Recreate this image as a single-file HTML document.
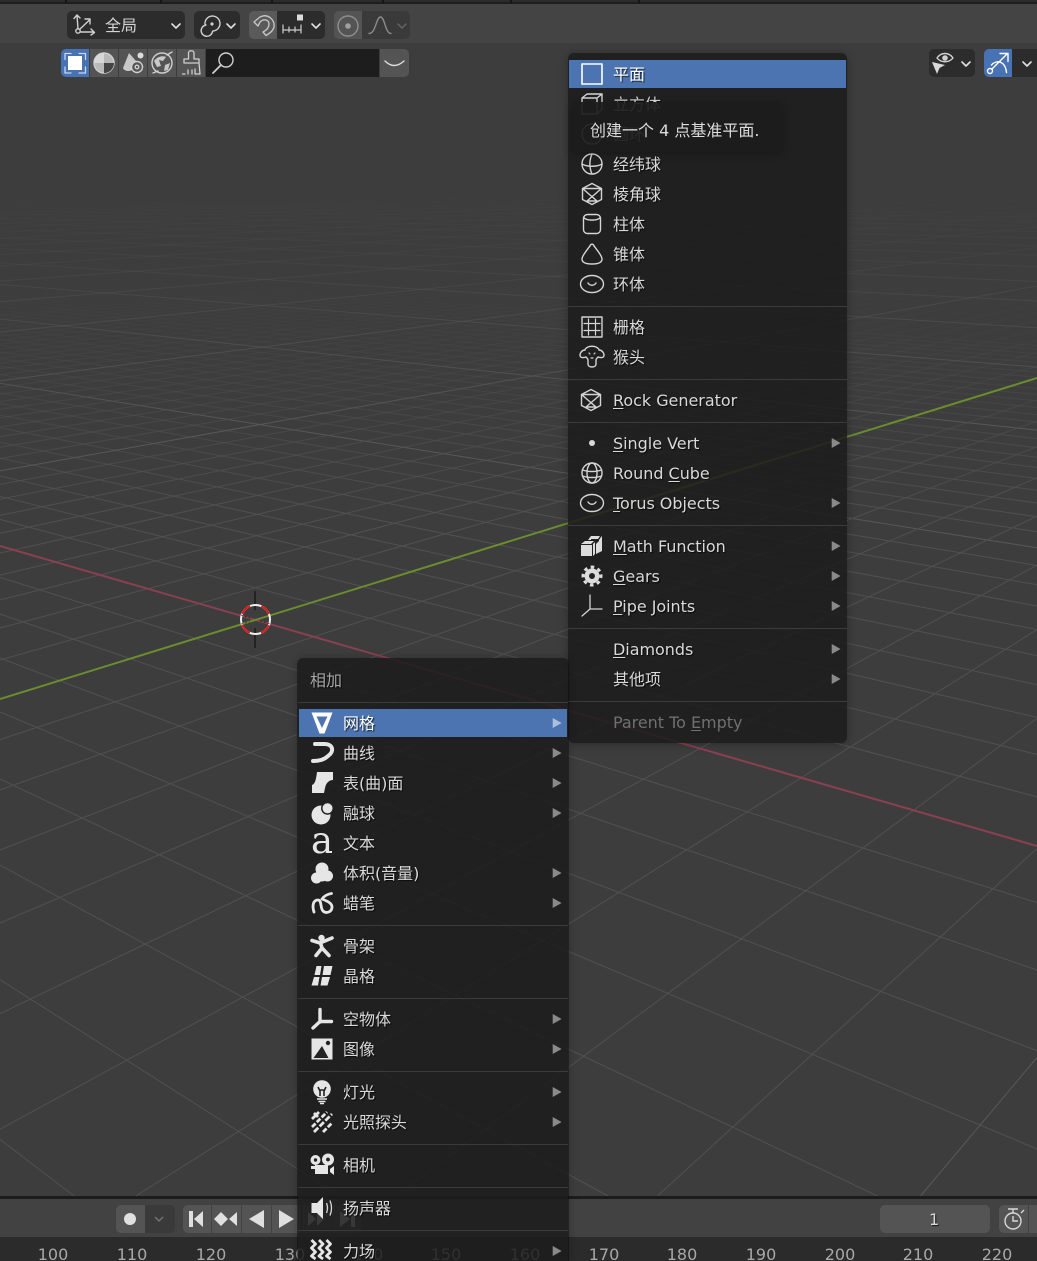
<!DOCTYPE html>
<html lang="zh"><head><meta charset="utf-8"><title>Blender</title>
<style>
html,body{margin:0;padding:0;background:#3d3d3d;width:1037px;height:1261px;overflow:hidden}
#p{position:relative;width:1037px;height:1261px;overflow:hidden;background:#3d3d3d;font-family:"DejaVu Sans","Noto Sans CJK SC",sans-serif;font-size:16px;color:#d9d9d9}
.b,.t,svg.a{position:absolute}
svg.a{left:0;top:0;width:1037px;height:1261px;overflow:hidden}
.t{height:22px;line-height:22px;white-space:pre;margin-top:1px;letter-spacing:-.03px;text-shadow:1px 1px 1px rgba(0,0,0,.75)}
.t u{text-underline-offset:2px;text-decoration-thickness:1px}
.n{position:absolute;top:1244px;width:60px;margin-left:-30px;text-align:center;color:#a8a8a8;font-size:16px;line-height:22px;height:17px;overflow:hidden}
.m{position:absolute;background:rgba(28,28,28,.86);border-radius:6px;box-shadow:0 1px 9px rgba(0,0,0,.3)}
.s{position:absolute;height:1px;background:#3b3b3b}
</style></head><body><div id="p">

<svg class="a" id="grid" viewBox="0 0 1037 1261">
<defs>
<linearGradient id="gm" gradientUnits="userSpaceOnUse" x1="0" y1="270" x2="0" y2="520"><stop offset="0" stop-color="#505050" stop-opacity="0"/><stop offset=".24" stop-color="#505050" stop-opacity=".15"/><stop offset=".52" stop-color="#505050" stop-opacity=".45"/><stop offset="1" stop-color="#505050"/></linearGradient>
<linearGradient id="gM" gradientUnits="userSpaceOnUse" x1="0" y1="190" x2="0" y2="430"><stop offset="0" stop-color="#585858" stop-opacity="0"/><stop offset=".3" stop-color="#585858" stop-opacity=".2"/><stop offset="1" stop-color="#585858"/></linearGradient>
</defs>
<g id="gl" fill="none" stroke-width="1"></g>
<path d="M0 546L1037 846" stroke="#8a4050" stroke-width="2" fill="none"/>
<path d="M0 699L1037 378" stroke="#6c8c2e" stroke-width="2" fill="none"/>
</svg>
<script>
(function(){var s='',VX=[-1250,185],VY=[1800,150],W=1037,H=1196;
function L(v,d,m){var l=Math.hypot(d[0],d[1]),dx=d[0]/l*6000,dy=d[1]/l*6000,a=0,b=1,
p=[-dx,dx,-dy,dy],q=[v[0],W-v[0],v[1],H-v[1]];
for(var i=0;i<4;i++){if(p[i]==0){if(q[i]<0)return;continue;}var r=q[i]/p[i];if(p[i]<0){if(r>a)a=r;}else{if(r<b)b=r;}}
if(a>=b)return;
s+='<path stroke="url(#g'+(m?'M':'m')+')" d="M'+(v[0]+a*dx).toFixed(1)+' '+(v[1]+a*dy).toFixed(1)+'L'+(v[0]+b*dx).toFixed(1)+' '+(v[1]+b*dy).toFixed(1)+'"/>';}
for(var k=-150;k<=13;k++){if(k==0)continue;var m=k%10==0;if(!m&&k<-35)continue;var w=.001829-.00014*k;L(VX,[1819.7*w,1-21*w],m);}
for(var j=-150;j<=13;j++){if(j==0)continue;var m2=j%10==0;if(!m2&&j<-35)continue;var u=.00278-.000209*j;L(VY,[-1230.3*u,14*u+1],m2);}
document.getElementById('gl').innerHTML=s;})();
</script>

<!-- 3D cursor -->
<svg class="a" viewBox="0 0 1037 1261">
<path d="M255 591V610M255 628V648" stroke="#151515" stroke-width="1.2"/>
<circle cx="255.5" cy="619.5" r="14.5" fill="none" stroke="#f0f0f0" stroke-width="2"/>
<circle cx="255.5" cy="619.5" r="14.5" fill="none" stroke="#e01a1a" stroke-width="2" stroke-dasharray="11.4 11.4" stroke-dashoffset="5.7" transform="rotate(-45 255.5 619.5)"/>
<path d="M241 615L250 618M260 621L270 624M241 624L250 622" stroke="#222" stroke-width="1" stroke-dasharray="2 2" opacity=".7"/>
</svg>

<!-- top bar -->
<div class="b" style="left:0;top:0;width:1037px;height:4px;background:#1e1e1e"></div>
<div class="b" style="left:0;top:0;width:1037px;height:2px;background:#2b2b2b"></div>
<div class="b" style="left:65px;top:0;width:2px;height:3px;background:#161616"></div>
<div class="b" style="left:160px;top:0;width:2px;height:3px;background:#161616"></div>
<div class="b" style="left:271px;top:0;width:2px;height:3px;background:#161616"></div>
<div class="b" style="left:382px;top:0;width:2px;height:3px;background:#161616"></div>
<div class="b" style="left:510px;top:0;width:2px;height:3px;background:#161616"></div>
<div class="b" style="left:638px;top:0;width:2px;height:3px;background:#161616"></div>
<div class="b" style="left:0;top:4px;width:1037px;height:39px;background:#444"></div>

<!-- toolbar row 1 -->
<div class="b" style="left:67px;top:11px;width:118px;height:28px;background:#2c2c2c;border-radius:5px"></div>
<div class="t" style="left:105px;top:15px;margin-top:0;text-shadow:none;color:#d4d4d4">全局</div>
<div class="b" style="left:194px;top:11px;width:46px;height:28px;background:#2c2c2c;border-radius:5px"></div>
<div class="b" style="left:249px;top:11px;width:28px;height:28px;background:#5a5a5a;border-radius:5px 0 0 5px"></div>
<div class="b" style="left:277px;top:11px;width:48px;height:28px;background:#2c2c2c;border-radius:0 5px 5px 0"></div>
<div class="b" style="left:334px;top:11px;width:28px;height:28px;background:#545454;border-radius:5px 0 0 5px"></div>
<div class="b" style="left:362px;top:11px;width:48px;height:28px;background:#3a3a3a;border-radius:0 5px 5px 0"></div>

<!-- toolbar row 2 -->
<div class="b" style="left:61px;top:49px;width:28px;height:28px;background:#4772b3;border-radius:5px 0 0 5px"></div>
<div class="b" style="left:90px;top:49px;width:28px;height:28px;background:#545454"></div>
<div class="b" style="left:119px;top:49px;width:28px;height:28px;background:#545454"></div>
<div class="b" style="left:148px;top:49px;width:28px;height:28px;background:#545454"></div>
<div class="b" style="left:177px;top:49px;width:28px;height:28px;background:#545454"></div>
<div class="b" style="left:206px;top:49px;width:173px;height:28px;background:#1d1d1d"></div>
<div class="b" style="left:380px;top:49px;width:29px;height:28px;background:#545454;border-radius:0 5px 5px 0"></div>

<!-- right tools -->
<div class="b" style="left:929px;top:49px;width:46px;height:28px;background:#2c2c2c;border-radius:5px"></div>
<div class="b" style="left:984px;top:49px;width:28px;height:28px;background:#4772b3;border-radius:5px 0 0 5px"></div>
<div class="b" style="left:1012px;top:49px;width:25px;height:28px;background:#2c2c2c"></div>

<svg class="a" viewBox="0 0 1037 1261" fill="none" stroke="#d0d0d0" stroke-width="1.4" stroke-linecap="round" stroke-linejoin="round">
<!-- chevrons -->
<path d="M172 24L176 28L180 24M227 24L231 28L235 24M312 24L316 28L320 24M962 62L966 66L970 62M1023 62L1027 66L1031 62" stroke="#e0e0e0" stroke-width="1.6"/>
<path d="M398 24L402 28L406 24" stroke="#666"/>
<!-- axes -->
<circle cx="78" cy="31" r="2.2"/><path d="M78 29L77 15M74 18.500L77 15L80 18M80 29L90 19.500M85 19L90 19L90 24M80.500 32H94M91 29L94.500 32.500L91 35"/>
<!-- pivot -->
<path d="M205 24A7.500 7.500 0 1 1 213 31" /><path d="M207 25A5.700 5.700 0 1 0 213.500 31.500" transform="translate(-1 0)"/><circle cx="212" cy="24" r="1.600" fill="#d0d0d0" stroke="none"/>
<!-- magnet -->
<path d="M254 22L260 17C268 13 275 20 274 27C273 31 270 33 266 35.500L263 32C267 30 269 27 269 24C269 20 264 18 260 22L258 26Z" stroke="#c4c4c4"/>
<!-- increment -->
<rect x="297" y="14.500" width="6" height="6" fill="#ddd" stroke="none"/><path d="M283 25V33M301 25V33M283 30H301M289 27V32M295 27V32" stroke="#ccc" stroke-width="1.200"/>
<!-- proportional -->
<circle cx="348" cy="26" r="10" stroke="#8e8e8e"/><circle cx="348" cy="26" r="2.800" fill="#a0a0a0" stroke="none"/>
<path d="M369 33.500C376 33.500 376 17 380.500 17C385 17 385 33.500 391 33.500" stroke="#8a8a8a"/>
<!-- select -->
<rect x="68" y="56" width="14" height="14" fill="#fff" stroke="none"/>
<path d="M71 53.500H65V59.500M79 53.500H85.500V59.500M65 67V73H71M79 73H85.500V67" stroke="#c9d6ec" stroke-width="1.300"/>
<!-- shading -->
<circle cx="104" cy="63" r="10" fill="#b9b9b9" stroke="#cfcfcf"/><path d="M104 63V73A10 10 0 0 0 114 63Z" fill="#444" stroke="none"/><path d="M104 63V53A10 10 0 0 0 94 63Z" fill="#d8d8d8" stroke="none"/>
<!-- overlays -->
<path d="M129 53L123 68C124 71 129 72 132 70C131 66 133 63 136 61Z" fill="#c8c8c8" stroke="none"/><circle cx="140.500" cy="55.500" r="3" fill="#ddd" stroke="none"/><circle cx="137" cy="67" r="5.500"/><circle cx="137" cy="67" r="1.800"/>
<!-- world -->
<circle cx="162" cy="63" r="10"/><path d="M154 61C157 57 162 55 166 57L163 61L159 60L161 66L157 67ZM165 65L170 63L168 70L164 71Z" fill="#c8c8c8" stroke="none"/><path d="M153 73L158 71M167 55L172 52"/>
<!-- brush -->
<path d="M188.500 53C188.500 50 194 50 194 53V59H199V63H184V59H188.500ZM184 63H199L200 74H195V69M192 74V70M188 74V70M185 74H182.500Z" stroke-width="1.300"/>
<!-- search -->
<circle cx="226" cy="60" r="7"/><path d="M221 65L213 73" stroke-width="1.800"/>
<path d="M385 61Q394 70 404 61" stroke="#ddd" stroke-width="1.400"/>
<!-- eye cursor -->
<path d="M937 58C941 52 949 52 953 58C949 63 941 63 937 58Z"/><circle cx="945" cy="58" r="2.800" fill="#d0d0d0" stroke="none"/>
<path d="M932 62L945 65L939.500 68L937 74Z" fill="#d8d8d8" stroke="none"/>
<!-- gizmo -->
<circle cx="990" cy="71" r="2.500" stroke="#fff"/><path d="M992 69L1007 54M1000 53.500H1008V61.500M991.500 65C996 60 1005 60 1006.500 72.500" stroke="#fff"/>
</svg>

<!-- timeline -->
<div class="b" style="left:0;top:1196px;width:1037px;height:3px;background:#1c1c1c"></div>
<div class="b" style="left:0;top:1199px;width:1037px;height:38px;background:#424242"></div>
<div class="b" style="left:0;top:1237px;width:1037px;height:24px;background:#2b2b2b"></div>
<div class="b" style="left:116px;top:1205px;width:29px;height:28px;background:#545454;border-radius:5px 0 0 5px"></div>
<div class="b" style="left:145px;top:1205px;width:30px;height:28px;background:#3a3a3a;border-radius:0 5px 5px 0"></div>
<div class="b" style="left:183px;top:1205px;width:28px;height:28px;background:#545454;border-radius:5px 0 0 5px"></div>
<div class="b" style="left:212px;top:1205px;width:29px;height:28px;background:#545454"></div>
<div class="b" style="left:242px;top:1205px;width:29px;height:28px;background:#545454"></div>
<div class="b" style="left:272px;top:1205px;width:29px;height:28px;background:#545454"></div>
<div class="b" style="left:302px;top:1205px;width:29px;height:28px;background:#545454"></div>
<div class="b" style="left:332px;top:1205px;width:29px;height:28px;background:#545454;border-radius:0 5px 5px 0"></div>
<div class="b" style="left:880px;top:1205px;width:110px;height:28px;background:#545454;border-radius:5px"></div>
<div class="t" style="left:929px;top:1208px">1</div>
<div class="b" style="left:999px;top:1205px;width:29px;height:28px;background:#545454;border-radius:5px 0 0 5px"></div>
<div class="b" style="left:1029px;top:1205px;width:8px;height:28px;background:#545454"></div>
<svg class="a" viewBox="0 0 1037 1261">
<circle cx="130" cy="1219" r="6" fill="#e0e0e0"/>
<path d="M155 1217L159 1221L163 1217" fill="none" stroke="#777" stroke-width="1.300"/>
<path d="M189 1211H193V1227H189ZM203 1211V1227L194 1219Z" fill="#e0e0e0"/>
<path d="M221 1212L228 1219L221 1226L214 1219ZM237 1212V1226L229 1219Z" fill="#e0e0e0"/>
<path d="M264 1210V1228L249 1219Z" fill="#e0e0e0"/>
<path d="M279 1210V1228L294 1219Z" fill="#e0e0e0"/>
<path d="M308 1212L316 1219L308 1226ZM317 1212L324 1219L317 1226Z" fill="#e0e0e0"/>
<path d="M340 1211L350 1219L340 1227ZM351 1211H355V1227H351Z" fill="#e0e0e0"/>
<g fill="none" stroke="#d8d8d8" stroke-width="1.400"><circle cx="1013" cy="1221" r="8"/><path d="M1008 1209H1018M1013 1209V1213M1013 1216V1221H1018M1021 1213L1024 1210"/></g>
</svg>
<div class="n" style="left:53px">100</div><div class="n" style="left:132px">110</div><div class="n" style="left:211px">120</div><div class="n" style="left:290px">130</div><div class="n" style="left:368px">140</div><div class="n" style="left:446px">150</div><div class="n" style="left:525px">160</div><div class="n" style="left:604px">170</div><div class="n" style="left:682px">180</div><div class="n" style="left:761px">190</div><div class="n" style="left:840px">200</div><div class="n" style="left:918px">210</div><div class="n" style="left:997px">220</div>

<!-- right menu -->
<div class="m" style="left:568px;top:53px;width:279px;height:690px"></div>
<div class="b" style="left:569px;top:60px;width:277px;height:28px;background:#4c74b0"></div>
<div class="s" style="left:568px;top:306px;width:279px"></div><div class="s" style="left:568px;top:379px;width:279px"></div><div class="s" style="left:568px;top:422px;width:279px"></div><div class="s" style="left:568px;top:525px;width:279px"></div><div class="s" style="left:568px;top:628px;width:279px"></div><div class="s" style="left:568px;top:701px;width:279px"></div>
<div class="t" style="left:613px;top:63px;color:#fff">平面</div>
<div class="t" style="left:613px;top:93px">立方体</div>
<div class="t" style="left:613px;top:123px">圆环</div>
<div class="t" style="left:613px;top:153px">经纬球</div>
<div class="t" style="left:613px;top:183px">棱角球</div>
<div class="t" style="left:613px;top:213px">柱体</div>
<div class="t" style="left:613px;top:243px">锥体</div>
<div class="t" style="left:613px;top:273px">环体</div>
<div class="t" style="left:613px;top:316px">栅格</div>
<div class="t" style="left:613px;top:346px">猴头</div>
<div class="t" style="left:613px;top:389px"><u>R</u>ock Generator</div>
<div class="t" style="left:613px;top:432px"><u>S</u>ingle Vert</div>
<div class="t" style="left:613px;top:462px">Round <u>C</u>ube</div>
<div class="t" style="left:613px;top:492px"><u>T</u>orus Objects</div>
<div class="t" style="left:613px;top:535px"><u>M</u>ath Function</div>
<div class="t" style="left:613px;top:565px"><u>G</u>ears</div>
<div class="t" style="left:613px;top:595px"><u>P</u>ipe Joints</div>
<div class="t" style="left:613px;top:638px"><u>D</u>iamonds</div>
<div class="t" style="left:613px;top:668px">其他项</div>
<div class="t" style="left:613px;top:711px;color:#707070;text-shadow:none">Parent To <u>E</u>mpty</div>

<svg class="a" viewBox="0 0 1037 1261" fill="none" stroke="#d4d4d4" stroke-width="1.400" stroke-linecap="round" stroke-linejoin="round">
<rect x="582" y="64" width="20" height="20" stroke="#fff" stroke-width="1.600" stroke-linecap="butt"/>
<path d="M582 98L587 94H602V109L597 114H582ZM582 98H597V114M597 98L602 94"/>
<circle cx="592" cy="134" r="10"/>
<g transform="translate(592 164)"><circle r="10"/><path d="M-10 0C-5 3 5 3 10 0M0 -10C-3 -3 -3 3 0 10"/></g>
<g transform="translate(592 194)"><path d="M0 -10.500L9.500 -5.500V5.500L0 10.500L-9.500 5.500V-5.500ZM-9.500 -5.500H9.500M-9.500 -5.500L5 7M9.500 -5.500L-5 7M-5 7H5"/></g>
<g transform="translate(592 224)"><rect x="-8.500" y="-9.500" width="17" height="19" rx="4"/><path d="M-8.500 -6.500C-5 -3 5 -3 8.500 -6.500"/></g>
<g transform="translate(592 254)"><path d="M-1.500 -9C-3 -6 -10 1 -10 5C-10 9 -5 10 0 10C5 10 10 9 10 5C10 1 3 -6 1.500 -9C1 -10 -1 -10 -1.500 -9Z"/></g>
<g transform="translate(592 284)"><ellipse rx="11.500" ry="8.500"/><path d="M-4 -1C-2 2 2 2 4 -1"/></g>
<g transform="translate(592 327)"><rect x="-10" y="-10" width="20" height="20"/><path d="M-8 -3.500H8M-8 3.500H8M-3.500 -8V8M3.500 -8V8" stroke-width="1.200"/></g>
<g transform="translate(592 357)"><path d="M-4 -10C-6 -9 -7 -8 -7 -7C-10 -7 -12 -4 -12 -2C-12 1 -9 1 -6 0C-5 1 -4 2 -4 3V7C-4 11 4 11 4 7V3C4 2 5 1 6 0C9 1 12 1 12 -2C12 -4 10 -7 7 -7C7 -8 6 -9 4 -10C2 -11 -2 -11 -4 -10Z"/><path d="M-3 -4L-2 -3M2 -3L3 -4M-1 1H1" stroke-width="1.200"/></g>
<g transform="translate(591 400)"><path d="M0 -10.500L9.500 -5.500V5.500L0 10.500L-9.500 5.500V-5.500ZM-9.500 -5.500H9.500M-9.500 -5.500L5 7M9.500 -5.500L-5 7M-5 7H5"/></g>
<circle cx="592" cy="443" r="3" fill="#d8d8d8" stroke="none"/>
<g transform="translate(592 473)"><circle r="10"/><ellipse rx="5" ry="10"/><path d="M-9.500 -3C-4 -1 4 -1 9.500 -3M-9.500 3C-4 5 4 5 9.500 3"/></g>
<g transform="translate(592 503)"><ellipse rx="11.500" ry="8.500"/><path d="M-4 -1C-2 2 2 2 4 -1"/></g>
<g transform="translate(592 546)" fill="#dcdcdc" stroke="none"><path d="M-11 -2L-7 -5H2L-1 -2ZM-11 -1H0V10H-11ZM1 -2L3 -4V8L1 10ZM-4 -6L-1 -10H8L6 -7H-1V-6ZM7 -6L9 -9L10 -10V5L4 8V-2L7 -5Z"/></g>
<g transform="translate(592 576)"><circle r="7.500" fill="#dcdcdc" stroke="none"/><circle r="9" stroke="#dcdcdc" stroke-width="3" stroke-dasharray="3.500 3.570" stroke-linecap="butt" transform="rotate(-10)"/><circle r="3" fill="#232323" stroke="none"/></g>
<path d="M590 595V609H602M590 609L582 616" stroke-width="1.300"/>
<!-- arrows -->
<g fill="#8a8a8a" stroke="#8a8a8a" stroke-width=".6"><path d="M832 438.500V447.500L840 443ZM832 498.500V507.500L840 503ZM832 541.500V550.500L840 546ZM832 571.500V580.500L840 576ZM832 601.500V610.500L840 606ZM832 644.500V653.500L840 649ZM832 674.500V683.500L840 679Z"/></g>
</svg>

<!-- tooltip -->
<div class="b" style="left:571px;top:102px;width:212px;height:50px;background:rgba(28,28,28,.93);border-radius:7px;box-shadow:0 2px 8px rgba(0,0,0,.25)"></div>
<div class="t" style="left:590px;top:119px;letter-spacing:0;text-shadow:none;color:#dcdcdc">创建一个 4 点基准平面.</div>

<!-- left menu -->
<div class="m" style="left:298px;top:658px;width:270px;height:603px;border-radius:6px 6px 0 0;box-shadow:-1px 0 0 rgba(10,10,10,.45),1px 0 0 rgba(10,10,10,.45),0 1px 9px rgba(0,0,0,.3)"></div>
<div class="t" style="left:310px;top:669px;color:#a6a6a6">相加</div>
<div class="s" style="left:298px;top:702px;width:270px"></div>
<div class="b" style="left:299px;top:709px;width:268px;height:28px;background:#4c74b0"></div>
<div class="s" style="left:298px;top:925px;width:270px"></div><div class="s" style="left:298px;top:998px;width:270px"></div><div class="s" style="left:298px;top:1071px;width:270px"></div><div class="s" style="left:298px;top:1144px;width:270px"></div><div class="s" style="left:298px;top:1187px;width:270px"></div><div class="s" style="left:298px;top:1230px;width:270px"></div>
<div class="t" style="left:343px;top:712px;color:#fff">网格</div>
<div class="t" style="left:343px;top:742px">曲线</div>
<div class="t" style="left:343px;top:772px">表(曲)面</div>
<div class="t" style="left:343px;top:802px">融球</div>
<div class="t" style="left:343px;top:832px">文本</div>
<div class="t" style="left:343px;top:862px">体积(音量)</div>
<div class="t" style="left:343px;top:892px">蜡笔</div>
<div class="t" style="left:343px;top:935px">骨架</div>
<div class="t" style="left:343px;top:965px">晶格</div>
<div class="t" style="left:343px;top:1008px">空物体</div>
<div class="t" style="left:343px;top:1038px">图像</div>
<div class="t" style="left:343px;top:1081px">灯光</div>
<div class="t" style="left:343px;top:1111px">光照探头</div>
<div class="t" style="left:343px;top:1154px">相机</div>
<div class="t" style="left:343px;top:1197px">扬声器</div>
<div class="t" style="left:343px;top:1240px;height:20px;overflow:hidden">力场</div>

<svg class="a" viewBox="0 0 1037 1261" fill="#e6e6e6" stroke="none">
<g transform="translate(322 723)"><path fill="#fff" fill-rule="evenodd" d="M-10.500 -10.500H10.500L2.500 10.500H-2.500ZM-5.500 -6.500L0 5L5.500 -6.500Z"/></g>
<path transform="translate(322 753)" d="M-7 -9H2C12 -9 12 -1 6 3C3 6 -2 8 -9 8" fill="none" stroke="#e6e6e6" stroke-width="4" stroke-linecap="round"/>
<path transform="translate(322 783)" d="M-5 -11H11V-3C7 -3 4 0 3 5L2 10H-10V2C-7 1 -6 -3 -5 -11Z"/>
<g transform="translate(322 813)"><circle cx="-1" cy="2" r="9.500"/><circle cx="5.500" cy="-4.700" r="6.500" fill="#232323"/><circle cx="5.500" cy="-4.700" r="5"/></g>
<text x="322" y="853" font-family="'DejaVu Serif',serif" font-size="37" text-anchor="middle" fill="#e6e6e6">a</text>
<g transform="translate(322 873)"><circle cx="0" cy="-4" r="6.500"/><circle cx="-5.500" cy="5" r="5.500"/><circle cx="5.500" cy="3" r="5.500"/><circle cx="0" cy="2" r="6.500"/></g>
<path transform="translate(322 903)" d="M-8 9C-10 3 -9 -3 -4 -3C0 -3 -2 5 1 8C4 11 10 9 10 4C10 0 5 -2 0 -4C2 -7 6 -9 9.500 -9.500" fill="none" stroke="#e6e6e6" stroke-width="2.800" stroke-linecap="round" stroke-linejoin="round"/>
<g transform="translate(322 946)"><circle cx="-.5" cy="-8" r="3.200"/><path d="M-10 -5.500L-2 -3L10 -8M-1.500 -3L0 2L-6 9.500M0 2L7 9.500" fill="none" stroke="#e6e6e6" stroke-width="3.600" stroke-linecap="round" stroke-linejoin="round"/></g>
<path transform="translate(322 976)" d="M-5.500 -10H-.5L-2 -1H-7.500ZM2 -10H10.500L8.500 -1H.5ZM-8 1H-2.500L-4 9.500H-10.500ZM0 1H8L5.500 9.500H-1.500Z"/>
<path transform="translate(322 1019)" d="M-2 -9.500V3M-2 2.500H9.500M-2 2.500L-9 9" fill="none" stroke="#e6e6e6" stroke-width="3.400" stroke-linecap="round" stroke-linejoin="round"/>
<g transform="translate(322 1049)"><rect x="-10.500" y="-10.500" width="21" height="21"/><path d="M-8.500 9L0 -3L6.500 9Z" fill="#232323"/><circle cx="6" cy="-6" r="2.200" fill="#232323"/></g>
<g transform="translate(322 1092)"><circle cx="0" cy="-3" r="8.800"/><path d="M-4 -5L-2 -1V4M4 -5L2 -1V4M-2 -2H2" fill="none" stroke="#232323" stroke-width="1.600"/><path d="M-5 7H5M-3.500 9.500H3.500M-2 11.500H2" stroke="#e6e6e6" stroke-width="1.400" fill="none"/></g>
<g transform="translate(322 1122)" fill="none" stroke="#e6e6e6" stroke-width="2.800"><path d="M-10 -3L-3 -10M-8 -9L-4 -5"/><path d="M-10 5L5 -10" stroke-dasharray="5 1.800"/><path d="M-8 10L10 -8" stroke-dasharray="6 2"/><path d="M1 10L10 1" stroke-dasharray="5 1.800"/></g>
<g transform="translate(322 1165)"><circle cx="-6.500" cy="-5" r="5"/><circle cx="6" cy="-5.500" r="6"/><rect x="-7" y="0" width="13" height="9"/><path d="M-11 1H-6V4H-11ZM8 4L12 1V10L8 7Z"/><circle cx="-6.500" cy="-5" r="1.700" fill="#232323"/><circle cx="6" cy="-5.500" r="1.900" fill="#232323"/></g>
<g transform="translate(322 1208)"><path d="M-10.500 -5H-5L1 -11V11L-5 5H-10.500Z"/><path d="M4.500 -5Q6.500 0 4.500 5M8 -7.500Q11 0 8 7.500" fill="none" stroke="#d8d8d8" stroke-width="1.300"/></g>
<g transform="translate(322 1251)" fill="none" stroke="#e6e6e6" stroke-width="2.800" stroke-linejoin="round"><path d="M-10.500 -11L-6.500 -7L-10.500 -3L-6.500 1L-10.500 5L-6.500 8"/><path d="M-3 -11L1 -7L-3 -3L1 1L-3 5L1 8"/><path d="M4.500 -11L8.500 -7L4.500 -3L8.500 1L4.500 5L8.500 8"/></g>
<path d="M553 718.500V727.500L561 723Z" fill="#a9c0e2" stroke="#a9c0e2" stroke-width=".6"/>
<g fill="#8a8a8a" stroke="#8a8a8a" stroke-width=".6"><path d="M553 748.500V757.500L561 753ZM553 778.500V787.500L561 783ZM553 808.500V817.500L561 813ZM553 868.500V877.500L561 873ZM553 898.500V907.500L561 903ZM553 1014.500V1023.500L561 1019ZM553 1044.500V1053.500L561 1049ZM553 1087.500V1096.500L561 1092ZM553 1117.500V1126.500L561 1122ZM553 1246.500V1255.500L561 1251Z"/></g>
</svg>

</div></body></html>
